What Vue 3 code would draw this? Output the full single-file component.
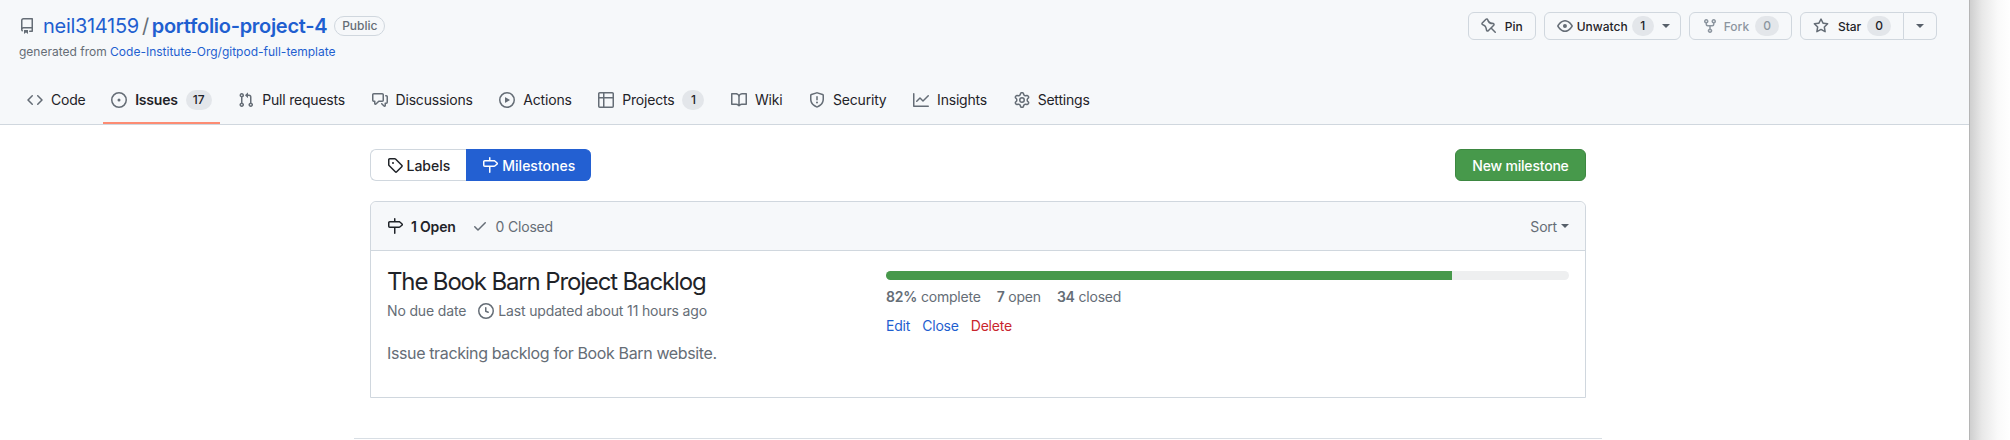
<script setup>
const icons = {
  repo: 'M2 2.5A2.5 2.5 0 0 1 4.5 0h8.75a.75.75 0 0 1 .75.75v12.5a.75.75 0 0 1-.75.75h-2.5a.75.75 0 0 1 0-1.5h1.75v-2h-8a1 1 0 0 0-.714 1.7.75.75 0 1 1-1.072 1.05A2.495 2.495 0 0 1 2 11.5Zm10.5-1h-8a1 1 0 0 0-1 1v6.708A2.486 2.486 0 0 1 4.5 9h8ZM5 12.25a.25.25 0 0 1 .25-.25h3.5a.25.25 0 0 1 .25.25v3.25a.25.25 0 0 1-.4.2l-1.45-1.087a.249.249 0 0 0-.3 0L5.4 15.7a.25.25 0 0 1-.4-.2Z',
  code: 'm11.28 3.22 4.25 4.25a.75.75 0 0 1 0 1.06l-4.25 4.25a.749.749 0 0 1-1.275-.326.749.749 0 0 1 .215-.734L13.94 8l-3.72-3.72a.749.749 0 0 1 .326-1.275.749.749 0 0 1 .734.215Zm-6.56 0a.751.751 0 0 1 1.042.018.751.751 0 0 1 .018 1.042L2.06 8l3.72 3.72a.749.749 0 0 1-.326 1.275.749.749 0 0 1-.734-.215L.47 8.53a.75.75 0 0 1 0-1.06Z',
  issue: 'M8 9.5a1.5 1.5 0 1 0 0-3 1.5 1.5 0 0 0 0 3ZM8 0a8 8 0 1 1 0 16A8 8 0 0 1 8 0ZM1.5 8a6.5 6.5 0 1 0 13 0 6.5 6.5 0 0 0-13 0Z',
  pull: 'M1.5 3.25a2.25 2.25 0 1 1 3 2.122v5.256a2.251 2.251 0 1 1-1.5 0V5.372A2.25 2.25 0 0 1 1.5 3.25Zm5.677-.177L9.573.677A.25.25 0 0 1 10 .854V2.5h1A2.5 2.5 0 0 1 13.5 5v5.628a2.251 2.251 0 1 1-1.5 0V5a1 1 0 0 0-1-1h-1v1.646a.25.25 0 0 1-.427.177L7.177 3.427a.25.25 0 0 1 0-.354ZM3.75 2.5a.75.75 0 1 0 0 1.5.75.75 0 0 0 0-1.5Zm0 9.5a.75.75 0 1 0 0 1.5.75.75 0 0 0 0-1.5Zm8.25.75a.75.75 0 1 0 1.5 0 .75.75 0 0 0-1.5 0Z',
  discussion: 'M1.75 1h8.5c.966 0 1.75.784 1.75 1.75v5.5A1.75 1.75 0 0 1 10.25 10H7.061l-2.574 2.573A1.458 1.458 0 0 1 2 11.543V10h-.25A1.75 1.75 0 0 1 0 8.25v-5.5C0 1.784.784 1 1.75 1ZM1.5 2.75v5.5c0 .138.112.25.25.25h1a.75.75 0 0 1 .75.75v2.19l2.72-2.72a.749.749 0 0 1 .53-.22h3.5a.25.25 0 0 0 .25-.25v-5.5a.25.25 0 0 0-.25-.25h-8.5a.25.25 0 0 0-.25.25Zm13 2a.25.25 0 0 0-.25-.25h-.5a.75.75 0 0 1 0-1.5h.5c.966 0 1.75.784 1.75 1.75v5.5A1.75 1.75 0 0 1 14.25 12H14v1.543a1.458 1.458 0 0 1-2.487 1.03L9.22 12.28a.749.749 0 0 1 .326-1.275.749.749 0 0 1 .734.215l2.22 2.22v-2.19a.75.75 0 0 1 .75-.75h1a.25.25 0 0 0 .25-.25Z',
  play: 'M8 0a8 8 0 1 1 0 16A8 8 0 0 1 8 0ZM1.5 8a6.5 6.5 0 1 0 13 0 6.5 6.5 0 0 0-13 0Zm4.879-2.773 4.264 2.559a.25.25 0 0 1 0 .428l-4.264 2.559A.25.25 0 0 1 6 10.559V5.442a.25.25 0 0 1 .379-.215Z',
  table: 'M0 1.75C0 .784.784 0 1.75 0h12.5C15.216 0 16 .784 16 1.75v12.5A1.75 1.75 0 0 1 14.25 16H1.75A1.75 1.75 0 0 1 0 14.25ZM6.5 6.5v8h7.75a.25.25 0 0 0 .25-.25V6.5Zm8-1.5V1.75a.25.25 0 0 0-.25-.25H6.5V5Zm-13 1.5v7.75c0 .138.112.25.25.25H5v-8ZM5 5V1.5H1.75a.25.25 0 0 0-.25.25V5Z',
  book: 'M0 1.75A.75.75 0 0 1 .75 1h4.253c1.227 0 2.317.59 3 1.501A3.743 3.743 0 0 1 11.006 1h4.245a.75.75 0 0 1 .75.75v10.5a.75.75 0 0 1-.75.75h-4.507a2.25 2.25 0 0 0-1.591.659l-.622.621a.75.75 0 0 1-1.06 0l-.622-.621A2.25 2.25 0 0 0 5.258 13H.75a.75.75 0 0 1-.75-.75Zm7.251 10.324.004-5.073-.002-2.253A2.25 2.25 0 0 0 5.003 2.5H1.5v9h3.757a3.75 3.75 0 0 1 1.994.574ZM8.755 4.75l-.004 7.322a3.752 3.752 0 0 1 1.992-.572H14.5v-9h-3.495a2.25 2.25 0 0 0-2.25 2.25Z',
  shield: 'M7.467.133a1.748 1.748 0 0 1 1.066 0l5.25 1.68A1.75 1.75 0 0 1 15 3.48V7c0 1.566-.32 3.182-1.303 4.682-.983 1.498-2.585 2.813-5.032 3.855a1.697 1.697 0 0 1-1.33 0c-2.447-1.042-4.049-2.357-5.032-3.855C1.32 10.182 1 8.566 1 7V3.48a1.75 1.75 0 0 1 1.217-1.667Zm.61 1.429a.25.25 0 0 0-.153 0l-5.25 1.68a.25.25 0 0 0-.174.238V7c0 1.358.275 2.666 1.057 3.86.784 1.194 2.121 2.34 4.366 3.297a.196.196 0 0 0 .154 0c2.245-.956 3.582-2.104 4.366-3.298C13.225 9.666 13.5 8.36 13.5 7V3.48a.251.251 0 0 0-.174-.237l-5.25-1.68ZM8.75 4.75v3a.75.75 0 0 1-1.5 0v-3a.75.75 0 0 1 1.5 0ZM9 10.5a1 1 0 1 1-2 0 1 1 0 0 1 2 0Z',
  graph: 'M1.5 1.75V13.5h13.75a.75.75 0 0 1 0 1.5H.75a.75.75 0 0 1-.75-.75V1.75a.75.75 0 0 1 1.5 0Zm14.28 2.53-5.25 5.25a.75.75 0 0 1-1.06 0L7 7.06 4.28 9.78a.751.751 0 0 1-1.042-.018.751.751 0 0 1-.018-1.042l3.25-3.25a.75.75 0 0 1 1.06 0L10 7.94l4.72-4.72a.751.751 0 0 1 1.042.018.751.751 0 0 1 .018 1.042Z',
  gear: 'M8 0a8.2 8.2 0 0 1 .701.031C9.444.095 9.99.645 10.16 1.29l.288 1.107c.018.066.079.158.212.224.231.114.454.243.668.386.123.082.233.09.299.071l1.103-.303c.644-.176 1.392.021 1.82.63.27.385.506.792.704 1.218.315.675.111 1.422-.364 1.891l-.814.806c-.049.048-.098.147-.088.294.016.257.016.515 0 .772-.01.147.038.246.088.294l.814.806c.475.469.679 1.216.364 1.891a7.977 7.977 0 0 1-.704 1.217c-.428.61-1.176.807-1.82.63l-1.102-.302c-.067-.019-.177-.011-.3.071a5.909 5.909 0 0 1-.668.386c-.133.066-.194.158-.211.224l-.29 1.106c-.168.646-.715 1.196-1.458 1.26a8.006 8.006 0 0 1-1.402 0c-.743-.064-1.289-.614-1.458-1.26l-.289-1.106c-.018-.066-.079-.158-.212-.224a5.738 5.738 0 0 1-.668-.386c-.123-.082-.233-.09-.299-.071l-1.103.303c-.644.176-1.392-.021-1.82-.63a8.12 8.12 0 0 1-.704-1.218c-.315-.675-.111-1.422.363-1.891l.815-.806c.05-.048.098-.147.088-.294a6.214 6.214 0 0 1 0-.772c.01-.147-.038-.246-.088-.294l-.815-.806C.635 6.045.431 5.298.746 4.623a7.92 7.92 0 0 1 .704-1.217c.428-.61 1.176-.807 1.82-.63l1.102.302c.067.019.177.011.3-.071.214-.143.437-.272.668-.386.133-.066.194-.158.211-.224l.29-1.106C6.009.645 6.556.095 7.299.03 7.53.01 7.764 0 8 0Zm-.571 1.525c-.036.003-.108.036-.137.146l-.289 1.105c-.147.561-.549.967-.998 1.189-.173.086-.34.183-.5.29-.417.278-.97.423-1.529.27l-1.103-.303c-.109-.03-.175.016-.195.045-.22.312-.412.644-.573.99-.014.031-.021.11.059.19l.815.806c.411.406.562.957.53 1.456a4.709 4.709 0 0 0 0 .582c.032.499-.119 1.05-.53 1.456l-.815.806c-.081.08-.073.159-.059.19.162.346.353.677.573.989.02.03.085.076.195.046l1.102-.303c.56-.153 1.113-.008 1.53.27.161.107.328.204.501.29.447.222.85.629.997 1.189l.289 1.105c.029.109.101.143.137.146a6.6 6.6 0 0 0 1.142 0c.036-.003.108-.036.137-.146l.289-1.105c.147-.561.549-.967.998-1.189.173-.086.34-.183.5-.29.417-.278.97-.423 1.529-.27l1.103.303c.109.029.175-.016.195-.045.22-.313.411-.644.573-.99.014-.031.021-.11-.059-.19l-.815-.806c-.411-.406-.562-.957-.53-1.456a4.709 4.709 0 0 0 0-.582c-.032-.499.119-1.05.53-1.456l.815-.806c.081-.08.073-.159.059-.19a6.464 6.464 0 0 0-.573-.989c-.02-.03-.085-.076-.195-.046l-1.102.303c-.56.153-1.113.008-1.53-.27a4.44 4.44 0 0 0-.501-.29c-.447-.222-.85-.629-.997-1.189l-.289-1.105c-.029-.11-.101-.143-.137-.146a6.6 6.6 0 0 0-1.142 0ZM11 8a3 3 0 1 1-6 0 3 3 0 0 1 6 0ZM9.5 8a1.5 1.5 0 1 0-3.001.001A1.5 1.5 0 0 0 9.5 8Z',
  pin: 'M4.456.734a1.75 1.75 0 0 1 2.826.504l.613 1.327a3.081 3.081 0 0 0 2.084 1.707l2.454.584c1.332.317 1.8 1.972.832 2.94L11.06 10l3.72 3.72a.748.748 0 0 1-.332 1.265.75.75 0 0 1-.729-.205L10 11.06l-2.204 2.205c-.968.968-2.623.5-2.94-.832l-.584-2.454a3.081 3.081 0 0 0-1.707-2.084l-1.327-.613a1.75 1.75 0 0 1-.504-2.826L4.456.734ZM5.92 1.866a.25.25 0 0 0-.404-.072L1.794 5.516a.25.25 0 0 0 .072.404l1.328.613A4.582 4.582 0 0 1 5.73 9.63l.584 2.454a.25.25 0 0 0 .42.12l5.47-5.47a.25.25 0 0 0-.12-.42L9.63 6.13a4.583 4.583 0 0 1-3.098-2.537Z',
  eye: 'M8 2c1.981 0 3.671.992 4.933 2.078 1.27 1.091 2.187 2.345 2.637 3.023a1.62 1.62 0 0 1 0 1.798c-.45.678-1.367 1.932-2.637 3.023C11.67 13.008 9.981 14 8 14c-1.981 0-3.671-.992-4.933-2.078C1.797 10.83.88 9.576.43 8.898a1.62 1.62 0 0 1 0-1.798c.45-.677 1.367-1.931 2.637-3.022C4.33 2.992 6.019 2 8 2ZM1.679 7.932a.12.12 0 0 0 0 .136c.411.622 1.241 1.75 2.366 2.717C5.176 11.758 6.527 12.5 8 12.5c1.473 0 2.825-.742 3.955-1.715 1.124-.967 1.954-2.096 2.366-2.717a.12.12 0 0 0 0-.136c-.412-.621-1.242-1.75-2.366-2.717C10.824 4.242 9.473 3.5 8 3.5c-1.473 0-2.825.742-3.955 1.715-1.124.967-1.954 2.096-2.366 2.717ZM8 10a2 2 0 1 1-.001-3.999A2 2 0 0 1 8 10Z',
  fork: 'M5 5.372v.878c0 .414.336.75.75.75h4.5a.75.75 0 0 0 .75-.75v-.878a2.25 2.25 0 1 1 1.5 0v.878a2.25 2.25 0 0 1-2.25 2.25h-1.5v2.128a2.251 2.251 0 1 1-1.5 0V8.5h-1.5A2.25 2.25 0 0 1 3.5 6.25v-.878a2.25 2.25 0 1 1 1.5 0ZM5 3.25a.75.75 0 1 0-1.5 0 .75.75 0 0 0 1.5 0Zm6.75.75a.75.75 0 1 0 0-1.5.75.75 0 0 0 0 1.5Zm-3 8.75a.75.75 0 1 0-1.5 0 .75.75 0 0 0 1.5 0Z',
  star: 'M8 .25a.75.75 0 0 1 .673.418l1.882 3.815 4.21.612a.75.75 0 0 1 .416 1.279l-3.046 2.97.719 4.192a.751.751 0 0 1-1.088.791L8 12.347l-3.766 1.98a.75.75 0 0 1-1.088-.79l.72-4.194L.818 6.374a.75.75 0 0 1 .416-1.28l4.21-.611L7.327.668A.75.75 0 0 1 8 .25Zm0 2.445L6.615 5.5a.75.75 0 0 1-.564.41l-3.097.45 2.24 2.184a.75.75 0 0 1 .216.664l-.528 3.084 2.769-1.456a.75.75 0 0 1 .698 0l2.77 1.456-.53-3.084a.75.75 0 0 1 .216-.664l2.24-2.183-3.096-.45a.75.75 0 0 1-.564-.41L8 2.694Z',
  tag: 'M1 7.775V2.75C1 1.784 1.784 1 2.75 1h5.025c.464 0 .91.184 1.238.513l6.25 6.25a1.75 1.75 0 0 1 0 2.474l-5.026 5.026a1.75 1.75 0 0 1-2.474 0l-6.25-6.25A1.75 1.75 0 0 1 1 7.775Zm1.5 0c0 .066.026.13.073.177l6.25 6.25a.25.25 0 0 0 .354 0l5.025-5.025a.25.25 0 0 0 0-.354l-6.25-6.25a.25.25 0 0 0-.177-.073H2.75a.25.25 0 0 0-.25.25ZM6 5a1 1 0 1 1 0 2 1 1 0 0 1 0-2Z',
  milestone: 'M7.75 0a.75.75 0 0 1 .75.75V3h3.634c.414 0 .814.147 1.13.414l2.07 1.75a1.75 1.75 0 0 1 0 2.672l-2.07 1.75a1.75 1.75 0 0 1-1.13.414H8.5v5.25a.75.75 0 0 1-1.5 0V10H2.75A1.75 1.75 0 0 1 1 8.25v-3.5C1 3.784 1.784 3 2.75 3H7V.75A.75.75 0 0 1 7.75 0Zm4.384 8.5a.25.25 0 0 0 .161-.06l2.07-1.75a.248.248 0 0 0 0-.38l-2.07-1.75a.25.25 0 0 0-.161-.06H2.75a.25.25 0 0 0-.25.25v3.5c0 .138.112.25.25.25h9.384Z',
  check: 'M13.78 4.22a.75.75 0 0 1 0 1.06l-7.25 7.25a.75.75 0 0 1-1.06 0L2.22 9.28a.751.751 0 0 1 .018-1.042.751.751 0 0 1 1.042-.018L6 10.94l6.72-6.72a.75.75 0 0 1 1.06 0Z',
  clock: 'M8 0a8 8 0 1 1 0 16A8 8 0 0 1 8 0ZM1.5 8a6.5 6.5 0 1 0 13 0 6.5 6.5 0 0 0-13 0Zm7-3.25v2.992l2.028.812a.75.75 0 0 1-.557 1.392l-2.5-1A.751.751 0 0 1 7 8.25v-3.5a.75.75 0 0 1 1.5 0Z'
}

const tabs = [
  { name: 'Code', icon: 'code' },
  { name: 'Issues', icon: 'issue', count: 17, active: true },
  { name: 'Pull requests', icon: 'pull' },
  { name: 'Discussions', icon: 'discussion' },
  { name: 'Actions', icon: 'play' },
  { name: 'Projects', icon: 'table', count: 1 },
  { name: 'Wiki', icon: 'book' },
  { name: 'Security', icon: 'shield' },
  { name: 'Insights', icon: 'graph' },
  { name: 'Settings', icon: 'gear' }
]
</script>

<template>
  <div class="page">
    <div class="main">
      <header class="repo-head">
        <div class="title-row">
          <div class="title-block">
            <div class="repo-name">
              <svg class="icon repo-icon" viewBox="0 0 16 16"><path :d="icons.repo" /></svg>
              <a class="owner">neil314159</a>
              <span class="slash">/</span>
              <a class="repo">portfolio-project-4</a>
              <span class="public">Public</span>
            </div>
            <div class="generated">generated from <a>Code-Institute-Org/gitpod-full-template</a></div>
          </div>
          <div class="actions">
            <div class="btn btn-pin">
              <svg class="icon" viewBox="0 0 16 16"><path :d="icons.pin" /></svg>
              <span>Pin</span>
            </div>
            <div class="btn btn-watch">
              <svg class="icon" viewBox="0 0 16 16"><path :d="icons.eye" /></svg>
              <span>Unwatch</span>
              <span class="count">1</span>
              <span class="caret"></span>
            </div>
            <div class="btn btn-fork">
              <svg class="icon" viewBox="0 0 16 16"><path :d="icons.fork" /></svg>
              <span>Fork</span>
              <span class="count">0</span>
            </div>
            <div class="btn-group">
              <div class="btn btn-star">
                <svg class="icon" viewBox="0 0 16 16"><path :d="icons.star" /></svg>
                <span>Star</span>
                <span class="count">0</span>
              </div>
              <div class="btn btn-more"><span class="caret"></span></div>
            </div>
          </div>
        </div>
        <nav class="tabs">
          <a v-for="tab in tabs" :key="tab.name" class="tab" :class="{ active: tab.active }">
            <svg class="icon" viewBox="0 0 16 16"><path :d="icons[tab.icon]" /></svg>
            <span>{{ tab.name }}</span>
            <span v-if="tab.count" class="count">{{ tab.count }}</span>
          </a>
        </nav>
      </header>

      <main class="content">
        <div class="inner">
          <div class="toolbar">
            <div class="subnav">
              <a class="subnav-item">
                <svg class="icon" viewBox="0 0 16 16"><path :d="icons.tag" /></svg>
                Labels
              </a>
              <a class="subnav-item selected">
                <svg class="icon" viewBox="0 0 16 16"><path :d="icons.milestone" /></svg>
                Milestones
              </a>
            </div>
            <a class="btn-primary">New milestone</a>
          </div>

          <section class="box">
            <div class="box-header">
              <div class="states">
                <span class="state open">
                  <svg class="icon" viewBox="0 0 16 16"><path :d="icons.milestone" /></svg>
                  1 Open
                </span>
                <span class="state">
                  <svg class="icon" viewBox="0 0 16 16"><path :d="icons.check" /></svg>
                  0 Closed
                </span>
              </div>
              <span class="sort">Sort <span class="caret"></span></span>
            </div>
            <div class="milestone">
              <div class="ms-left">
                <h2 class="ms-title">The Book Barn Project Backlog</h2>
                <div class="ms-meta">
                  <span>No due date</span>
                  <span class="updated">
                    <svg class="icon" viewBox="0 0 16 16"><path :d="icons.clock" /></svg>
                    Last updated about 11 hours ago
                  </span>
                </div>
                <p class="ms-desc">Issue tracking backlog for Book Barn website.</p>
              </div>
              <div class="ms-right">
                <div class="progress"><div class="progress-fill" :style="{ width: '82.8%' }"></div></div>
                <div class="stats">
                  <span><b>82%</b> complete</span>
                  <span><b>7</b> open</span>
                  <span><b>34</b> closed</span>
                </div>
                <div class="ms-actions">
                  <a>Edit</a>
                  <a>Close</a>
                  <a class="danger">Delete</a>
                </div>
              </div>
            </div>
          </section>

          <div class="bottom-rule"></div>
        </div>
      </main>
    </div>
    <div class="gutter"></div>
  </div>
</template>

<style>
html, body {
  margin: 0;
  background: #fff;
}
</style>

<style scoped>
.page {
  display: flex;
  width: 2010px;
  height: 440px;
  overflow: hidden;
  font-family: Inter, "Liberation Sans", sans-serif;
  font-size: 14px;
  letter-spacing: -0.2px;
  color: #1f2328;
}

.main {
  width: 1969px;
  flex: none;
}

.gutter {
  flex: 1;
  background: linear-gradient(to right, #cfcfcf, #e8e8e8 30%, #fafafa 70%, #fff);
  border-left: 1px solid #b5b5b5;
}

.icon {
  width: 16px;
  height: 16px;
  fill: #656d76;
  flex: none;
}

.repo-head {
  height: 124px;
  background: #f6f8fa;
  border-bottom: 1px solid #d0d7de;
  display: flex;
  flex-direction: column;
}

.title-row {
  display: flex;
  justify-content: space-between;
  align-items: flex-start;
  padding: 12px 32px 0 19px;
  height: 64px;
}

.repo-name {
  display: flex;
  align-items: center;
  height: 28px;
  font-size: 20px;
  letter-spacing: -0.3px;
}

.repo-icon {
  margin-right: 8px;
}

.owner {
  color: #1f5fd0;
}

.slash {
  margin: 0 3px;
  color: #656d76;
}

.repo {
  color: #1f5fd0;
  font-weight: 600;
}

.public {
  margin-left: 7px;
  padding: 0 7px;
  height: 20px;
  line-height: 18px;
  box-sizing: border-box;
  border: 1px solid #d0d7de;
  border-radius: 10px;
  font-size: 12px;
  font-weight: 500;
  letter-spacing: 0;
  color: #656d76;
}

.generated {
  margin-top: 3px;
  font-size: 12px;
  line-height: 18px;
  letter-spacing: 0;
  color: #656d76;
}

.generated a {
  color: #1f5fd0;
}

.actions {
  display: flex;
  gap: 8px;
}

.btn {
  display: flex;
  align-items: center;
  height: 28px;
  box-sizing: border-box;
  padding: 0 12px;
  gap: 8px;
  background: #f6f8fa;
  border: 1px solid #d0d7de;
  border-radius: 6px;
  font-size: 12px;
  font-weight: 500;
  letter-spacing: 0;
}

.count {
  display: inline-block;
  min-width: 22px;
  height: 20px;
  line-height: 20px;
  padding: 0 8px;
  box-sizing: border-box;
  text-align: center;
  background: #e3e6ea;
  border-radius: 10px;
  font-size: 12px;
  font-weight: 500;
  letter-spacing: 0;
}

.caret {
  display: inline-block;
  width: 0;
  height: 0;
  border-style: solid;
  border-width: 4px 4px 0;
  border-color: #57606a transparent transparent;
}

.btn-watch {
  gap: 4px;
  padding-right: 10px;
}

.btn-watch .caret {
  margin-left: 4px;
}

.btn-fork {
  color: #8c959f;
  gap: 6px;
}

.btn-fork .icon {
  fill: #8c959f;
}

.btn-group {
  display: flex;
}

.btn-star {
  border-radius: 6px 0 0 6px;
  gap: 9px;
}

.btn-star .count {
  margin-left: -3px;
}

.btn-more {
  border-left: 0;
  border-radius: 0 6px 6px 0;
  padding: 0 12px;
}

.tabs {
  display: flex;
  gap: 10.6px;
  padding-left: 19px;
  flex: 1;
}

.tab {
  display: flex;
  align-items: center;
  gap: 8px;
  padding: 13px 8px 0;
  height: 60px;
  box-sizing: border-box;
  border-bottom: 2px solid transparent;
}

.tab:first-child {
  padding-right: 7px;
}

.tab .count {
  padding: 0 7px;
}

.tab.active {
  font-weight: 600;
  border-bottom-color: #fd8c73;
}

.inner {
  width: 1248px;
  margin-left: 354px;
}

.toolbar {
  display: flex;
  justify-content: space-between;
  margin: 24px 16px 20px;
}

.subnav {
  display: flex;
}

.subnav-item {
  display: flex;
  align-items: center;
  gap: 4px;
  height: 32px;
  box-sizing: border-box;
  padding: 0 15.5px;
  border: 1px solid #d0d7de;
  border-right: 0;
  border-radius: 6px 0 0 6px;
  font-weight: 500;
  letter-spacing: 0;
}

.subnav-item .icon {
  fill: #1f2328;
}

.subnav-item.selected {
  background: #2360d2;
  border-color: #2360d2;
  border-radius: 0 6px 6px 0;
  color: #fff;
}

.subnav-item.selected .icon {
  fill: #fff;
}

.btn-primary {
  display: flex;
  align-items: center;
  justify-content: center;
  width: 131px;
  height: 32px;
  box-sizing: border-box;
  background: #47994b;
  border: 1px solid #3d8741;
  border-radius: 6px;
  color: #fff;
  font-weight: 500;
}

.box {
  margin: 0 16px;
  border: 1px solid #d0d7de;
  border-top-left-radius: 6px;
  border-top-right-radius: 6px;
}

.box-header {
  display: flex;
  justify-content: space-between;
  align-items: center;
  height: 48px;
  padding: 0 16px;
  background: #f6f8fa;
  border-bottom: 1px solid #d0d7de;
  border-radius: 6px 6px 0 0;
}

.states {
  display: flex;
  gap: 16px;
}

.state {
  display: flex;
  align-items: center;
  gap: 8px;
  color: #656d76;
}

.state.open {
  color: #1f2328;
  font-weight: 600;
}

.state.open .icon {
  fill: #1f2328;
}

.sort {
  color: #656d76;
  display: flex;
  align-items: center;
  gap: 4px;
}

.milestone {
  display: flex;
  height: 126px;
  padding: 20px 16px 0;
}

.ms-left {
  width: 499px;
}

.ms-title {
  margin: -4px 0 0;
  font-size: 24px;
  font-weight: 400;
  line-height: 30px;
  letter-spacing: -1.15px;
}

.ms-meta {
  display: flex;
  gap: 12px;
  margin-top: 3px;
  line-height: 21px;
  letter-spacing: -0.15px;
  color: #656d76;
}

.updated {
  display: flex;
  align-items: center;
  gap: 4px;
}

.ms-desc {
  margin: 20px 0 0;
  font-size: 16px;
  line-height: 24px;
  letter-spacing: -0.37px;
  color: #656d76;
}

.ms-right {
  flex: 1;
}

.progress {
  height: 9px;
  background: #eeeff0;
  border-radius: 5px;
  overflow: hidden;
}

.progress-fill {
  height: 100%;
  background: #47994b;
}

.stats {
  display: flex;
  gap: 16px;
  margin-top: 6px;
  line-height: 21px;
  color: #656d76;
}

.stats b {
  font-weight: 600;
}

.ms-actions {
  display: flex;
  gap: 12px;
  margin-top: 8px;
  line-height: 21px;
  color: #1f5fd0;
}

.danger {
  color: #c9252d;
}

.bottom-rule {
  margin-top: 40px;
  border-top: 1px solid #d8dee4;
}
</style>
